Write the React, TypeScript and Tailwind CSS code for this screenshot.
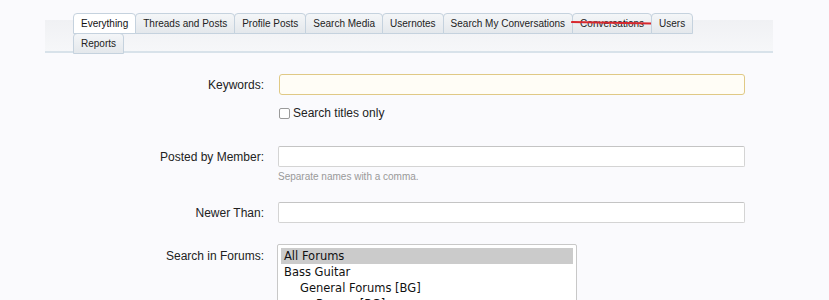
import React from 'react';

const tabs = [
  'Everything',
  'Threads and Posts',
  'Profile Posts',
  'Search Media',
  'Usernotes',
  'Search My Conversations',
  'Conversations',
  'Users',
  'Reports',
];

const forums = [
  { name: 'All Forums', depth: 0, selected: true },
  { name: 'Bass Guitar', depth: 0 },
  { name: 'General Forums [BG]', depth: 1 },
  { name: 'Basses [BG]', depth: 2 },
  { name: 'Amps [BG]', depth: 2 },
];

function Label({ children }: { children: React.ReactNode }) {
  return (
    <div className="w-[264px] shrink-0 text-right text-[12px] text-[#222]">
      {children}
    </div>
  );
}

export default function App() {
  return (
    <div
      className="w-[829px] h-[300px] overflow-hidden bg-[#fafafd] text-[#222]"
      style={{ fontFamily: '"Liberation Sans", Arial, sans-serif' }}
    >
      {/* Tab bar */}
      <div className="relative ml-[45px] w-[728px] pt-[13px]">
        <div className="absolute left-0 right-0 top-[20px] bottom-0 bg-gradient-to-b from-[#f0f1f4] to-[#f6f7f9] border-b-2 border-[#d8e2ea]" />
        <ul className="relative ml-[28px] w-[640px] flex flex-wrap">
          {tabs.map((t, i) => (
            <li
              key={t}
              className={
                'relative h-[21px] px-[7px] flex items-center text-[10px] border border-[#c5d2de] rounded-t-[4px] -mr-px -mb-px ' +
                (i === 0
                  ? 'bg-white text-[#111]'
                  : 'bg-gradient-to-b from-[#f4f6f8] to-[#e4e8ec] text-[#222]')
              }
            >
              {t}
              {t === 'Conversations' && (
                <svg className="absolute -left-[2px] top-[6px]" width="82" height="6" viewBox="0 0 82 6">
                  <path d="M1 2 L80 3.5" stroke="#d7282f" strokeWidth="2.2" strokeLinecap="round" fill="none" />
                </svg>
              )}
            </li>
          ))}
        </ul>
      </div>

      {/* Form */}
      <div className="mt-[21px]">
        <div className="flex items-center">
          <Label>Keywords:</Label>
          <input
            type="text"
            className="ml-[15px] w-[466px] h-[21px] bg-[#fffdf6] border border-[#e0c985] rounded-[3px] outline-none"
          />
        </div>
        <label className="mt-[9px] ml-[279px] flex items-center gap-[3px] text-[12px] text-[#222]">
          <span className="w-[11px] h-[11px] border border-[#9a9a9a] rounded-[2px] bg-white" />
          Search titles only
        </label>

        <div className="mt-[24px] flex items-center">
          <Label>Posted by Member:</Label>
          <input
            type="text"
            className="ml-[14px] w-[467px] h-[21px] bg-white border border-[#d4d4d4] border-t-[#c4c4c4] rounded-[2px] outline-none"
          />
        </div>
        <div className="ml-[278px] mt-[2px] text-[10px] text-[#999]">Separate names with a comma.</div>

        <div className="mt-[18px] flex items-center">
          <Label>Newer Than:</Label>
          <input
            type="text"
            className="ml-[14px] w-[467px] h-[21px] bg-white border border-[#d4d4d4] border-t-[#c4c4c4] rounded-[2px] outline-none"
          />
        </div>

        <div className="mt-[21px] flex items-start">
          <div className="pt-[3px]">
            <Label>Search in Forums:</Label>
          </div>
          <div className="ml-[13px] w-[300px] h-[100px] bg-white border border-[#c8c8c8] rounded-[2px] p-[3px]">
            {forums.map((f) => (
              <div
                key={f.name}
                className={
                  'h-[16px] leading-[16px] text-[11.5px] text-[#111] ' +
                  (f.selected ? 'bg-[#cbcbcb]' : '')
                }
                style={{ paddingLeft: 3 + f.depth * 16, fontFamily: '"DejaVu Sans", Verdana, sans-serif' }}
              >
                {f.name}
              </div>
            ))}
          </div>
        </div>
      </div>
    </div>
  );
}
